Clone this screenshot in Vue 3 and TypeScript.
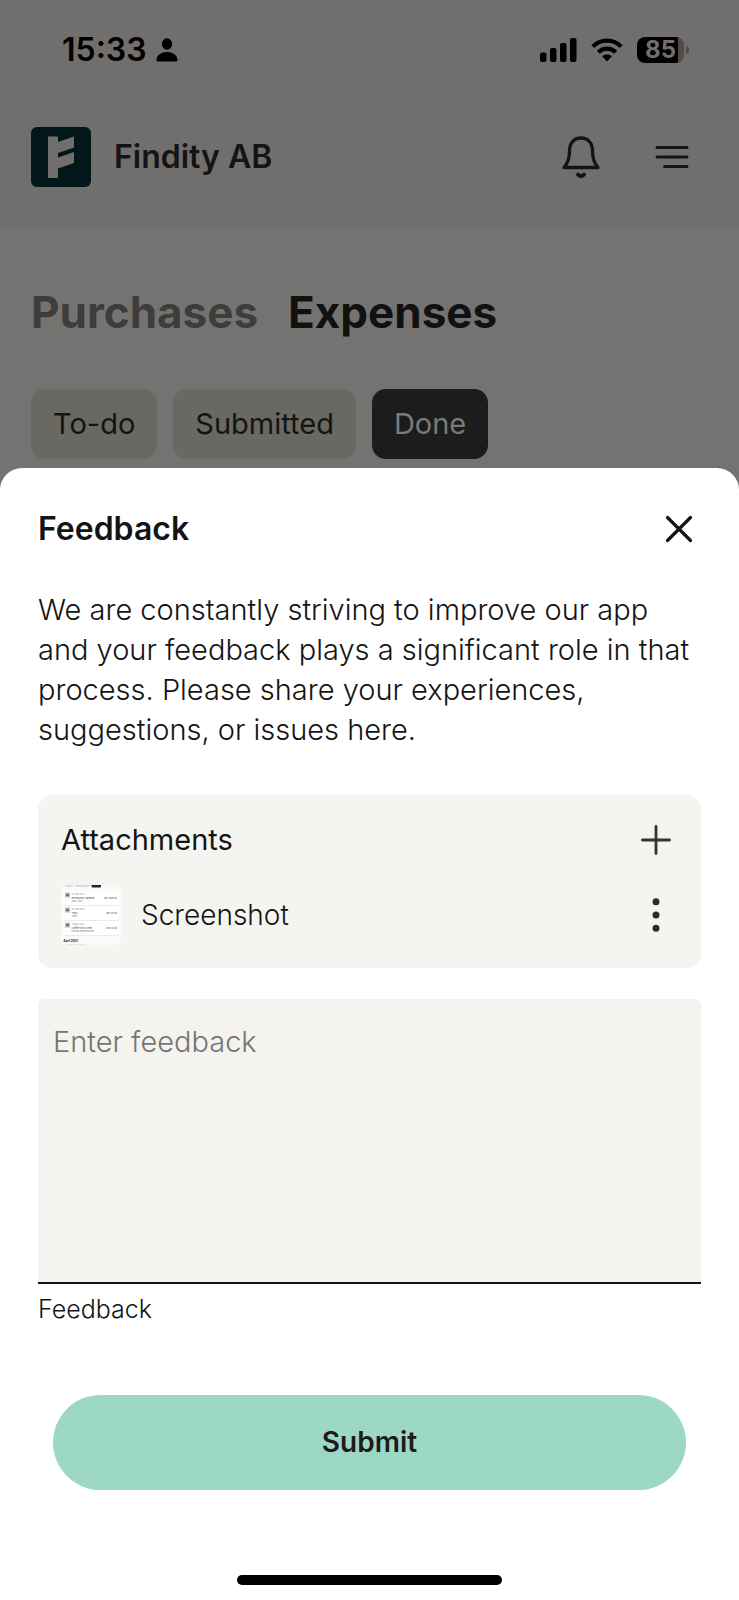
<script setup lang="ts">
import { ref } from 'vue'

const filters = ['To-do', 'Submitted', 'Done']
const activeFilter = ref('Done')
const feedback = ref('')

interface Receipt {
  date: string
  name: string
  note: string
  amount: string
  y: number
}

const receipts: Receipt[] = [
  { date: '13 June 2024', name: 'Restaurant Camera', note: 'Meal · Oslo', amount: 'SEK 1080.00', y: 6 },
  { date: '02 June 2024', name: 'Train', note: 'Travel', amount: 'SEK 94.00', y: 21 },
  { date: '21 May 2024', name: 'Coffee with client', note: 'External Representation', amount: 'SEK 84.00', y: 36 },
]
</script>

<template>
  <div class="screen">
    <div class="status">
      <div class="clock">
        <span>15:33</span>
        <svg width="22" height="24" viewBox="0 0 22 24" aria-hidden="true">
          <ellipse cx="11" cy="6" rx="5.2" ry="5.8" />
          <path d="M2.5 23.5C1 23.5.3 22.6.5 21.2 1.2 17 5.500 14 11 14s9.800 3 10.500 7.200c.2 1.400-.5 2.300-2 2.300z" />
        </svg>
      </div>
      <div class="indicators">
        <svg width="37" height="24" viewBox="0 0 37 24" aria-hidden="true">
          <rect x="0" y="14.500" width="6.500" height="9.500" rx="2" />
          <rect x="10" y="10" width="6.500" height="14" rx="2" />
          <rect x="20" y="5" width="6.500" height="19" rx="2" />
          <rect x="30" y="0" width="6.500" height="24" rx="2" />
        </svg>
        <svg width="32" height="24" viewBox="0 0 32 24" aria-hidden="true">
          <g fill="none" stroke="#000" stroke-width="4.200">
            <path d="M1.800 8.600C9.400 .6 22.600 .6 30.200 8.600" />
            <path d="M7.300 14.200C12 9.300 20 9.300 24.700 14.200" />
          </g>
          <path d="M16 23.500l-5-5.200c2.700-2.500 7.300-2.500 10 0z" />
        </svg>
        <div class="battery">
          <span class="level">85</span>
          <svg width="4" height="8" viewBox="0 0 4 8" aria-hidden="true"><path d="M0 0C4 1 4 7 0 8z" fill="#4e4d4c" /></svg>
        </div>
      </div>
    </div>

    <header class="header">
      <svg class="logo" width="60" height="60" viewBox="0 0 60 60" aria-hidden="true">
        <rect width="60" height="60" rx="6" fill="#021719" />
        <path d="M17 9.500h10v5.500l16-5.500v11L27 26v4.500l16-5.500v11L27 41.500V51H17z" fill="#706f6d" />
      </svg>
      <span class="company">Findity AB</span>
      <button class="icon-button" type="button" aria-label="Notifications">
        <svg width="40" height="44" viewBox="0 0 40 44">
          <g fill="none" stroke="#141414" stroke-width="3.300" stroke-linecap="round" stroke-linejoin="round">
            <path d="M3 32.500C6.500 28.500 8.500 23 8.500 16 8.500 8 13 3 20 3s11.500 5 11.500 13c0 7 2 12.500 5.500 16.500z" />
            <path d="M17 39.500c1.800 2.300 4.200 2.300 6 0" stroke-width="3.800" />
          </g>
        </svg>
      </button>
      <button class="icon-button" type="button" aria-label="Menu">
        <svg width="34" height="24" viewBox="0 0 34 24">
          <path d="M2 2.500h30M2 12h30M9.500 21.500H32" fill="none" stroke="#141414" stroke-width="3" stroke-linecap="round" />
        </svg>
      </button>
    </header>

    <main class="content">
      <nav class="tabs">
        <a href="#purchases">Purchases</a>
        <a href="#expenses" class="current" aria-current="page">Expenses</a>
      </nav>
      <div class="chips">
        <button
          v-for="filter in filters"
          :key="filter"
          type="button"
          :class="['chip', { selected: filter === activeFilter }]"
          @click="activeFilter = filter"
        >{{ filter }}</button>
      </div>
    </main>

    <section class="sheet" role="dialog" aria-labelledby="sheet-title">
      <div class="sheet-head">
        <h2 id="sheet-title">Feedback</h2>
        <button class="icon-button" type="button" aria-label="Close">
          <svg width="28" height="28" viewBox="0 0 28 28">
            <path d="M2.500 2.500l23 23M25.500 2.500l-23 23" fill="none" stroke="#141414" stroke-width="3.200" stroke-linecap="round" />
          </svg>
        </button>
      </div>

      <p class="intro">
        We are constantly striving to improve our app and your feedback plays a significant role in that process. Please share your experiences, suggestions, or issues here.
      </p>

      <div class="attachments">
        <div class="row">
          <h3>Attachments</h3>
          <button class="icon-button" type="button" aria-label="Add attachment">
            <svg width="30" height="30" viewBox="0 0 30 30">
              <path d="M15 1.500v27M1.500 15h27" fill="none" stroke="#333" stroke-width="2.800" stroke-linecap="round" />
            </svg>
          </button>
        </div>
        <div class="row">
          <svg class="thumb" width="60" height="60" viewBox="0 0 60 60" aria-hidden="true">
            <rect width="60" height="60" rx="5" fill="#fbfaf8" />
            <path d="M4 0h8v1.500q-4 1-8 0zM14 0h15v1.500q-7 1-15 0z" fill="#dedbd5" />
            <path d="M30.500 0H40v1.500q0 1-1 1h-7.500q-1 0-1-1z" fill="#222" />
            <g v-for="item in receipts" :key="item.name">
              <rect x="2" :y="item.y + 1" width="56" height="14" rx="1" fill="#ecebe8" />
              <rect x="2" :y="item.y" width="56" height="14" rx="1" fill="#fff" />
              <rect x="4" :y="item.y + 1.500" width="5" height="5" fill="#bbb" />
              <rect x="5.500" :y="item.y + 3" width="2" height="2" fill="#555" />
              <text x="10.500" :y="item.y + 4" font-size="2" fill="#888">{{ item.date }}</text>
              <text x="10.500" :y="item.y + 7.500" font-size="2.500" fill="#444">{{ item.name }}</text>
              <text x="10.500" :y="item.y + 11" font-size="2" fill="#777">{{ item.note }}</text>
              <text x="56" :y="item.y + 7.500" font-size="2.200" text-anchor="end" fill="#444">{{ item.amount }}</text>
            </g>
            <text x="2.500" y="56.500" font-size="2.800" font-weight="700" fill="#111">April 2024</text>
            <rect x="5" y="59" width="20" height="1" fill="#e6e5e2" />
          </svg>
          <span class="file">Screenshot</span>
          <button class="icon-button" type="button" aria-label="Attachment options">
            <svg width="30" height="34" viewBox="0 0 30 34" fill="#2b2b2b">
              <circle cx="15" cy="3.700" r="3.500" />
              <circle cx="15" cy="17" r="3.500" />
              <circle cx="15" cy="30.300" r="3.500" />
            </svg>
          </button>
        </div>
      </div>

      <textarea id="feedback" v-model="feedback" placeholder="Enter feedback"></textarea>
      <label class="helper" for="feedback">Feedback</label>

      <button class="submit" type="button">Submit</button>
      <div class="home-bar"></div>
    </section>
  </div>
</template>

<style>
body {
  margin: 0;
  background: #fff;
}
</style>

<style scoped>
.screen {
  box-sizing: border-box;
  display: flex;
  flex-direction: column;
  min-height: 100vh;
  background: #747371;
  color: #141414;
  font-family: Inter, "Liberation Sans", sans-serif;
}
h2, h3, p {
  margin: 0;
}
button {
  padding: 0;
  border: 0;
  background: none;
  color: inherit;
  font-family: inherit;
}
svg {
  display: block;
  flex: none;
}
.status {
  display: flex;
  justify-content: space-between;
  align-items: center;
  padding: 30px 49px 0 62px;
  height: 40px;
  background: #706f6d;
  color: #000;
}
.clock,
.indicators,
.battery {
  display: flex;
  align-items: center;
}
.clock {
  gap: 9px;
  font-size: 32px;
  line-height: 40px;
  font-weight: 600;
}
.indicators {
  gap: 14px;
}
.battery {
  gap: 2px;
}
.level {
  width: 47px;
  border-radius: 8px;
  background: linear-gradient(90deg, #000 41px, #4e4d4c 41px);
  color: #706f6d;
  font-size: 24px;
  line-height: 26px;
  font-weight: 700;
  text-align: center;
}
.header {
  display: flex;
  align-items: center;
  padding: 57px 50px 39px 31px;
  background: #706f6d;
}
.company {
  flex: 1;
  margin-left: 23px;
  font-size: 32px;
  line-height: 40px;
  font-weight: 600;
}
.header .icon-button + .icon-button {
  margin-left: 54px;
}
.content {
  padding: 58px 31px 0;
}
.tabs {
  display: flex;
  gap: 30px;
  font-size: 44px;
  line-height: 56px;
  font-weight: 700;
}
.tabs a {
  color: #3d3d3c;
  text-decoration: none;
}
.tabs .current {
  color: #111;
}
.chips {
  display: flex;
  gap: 16px;
  margin-top: 49px;
}
.chip {
  padding: 0 22px;
  border-radius: 14px;
  background: #696862;
  font-size: 29px;
  line-height: 70px;
}
.chip.selected {
  background: #1c1c1c;
  color: #7b7a78;
}
.sheet {
  display: flex;
  flex: 1;
  flex-direction: column;
  margin-top: 9px;
  padding: 0 38px 15px;
  border-radius: 22px 22px 0 0;
  background: #fff;
}
.sheet-head {
  display: flex;
  justify-content: space-between;
  align-items: center;
  padding: 41px 8px 0 0;
}
h2 {
  font-size: 32px;
  line-height: 40px;
  font-weight: 600;
}
.intro {
  margin-top: 41px;
  font-size: 29px;
  line-height: 40px;
  font-weight: 300;
}
.attachments {
  display: flex;
  flex-direction: column;
  gap: 25px;
  margin-top: 45px;
  padding: 25px 30px 23px 23px;
  border-radius: 14px;
  background: #f4f5f0;
}
.row {
  display: flex;
  align-items: center;
}
h3 {
  flex: 1;
  font-size: 29px;
  line-height: 40px;
  font-weight: 400;
}
.file {
  flex: 1;
  margin-left: 20px;
  font-size: 28px;
  line-height: 40px;
  font-weight: 300;
}
textarea {
  box-sizing: border-box;
  display: block;
  width: 100%;
  height: 285px;
  margin: 31px 0 0;
  padding: 23px 15px;
  border: 0;
  border-bottom: 2px solid #141414;
  border-radius: 6px 6px 0 0;
  background: #f4f3ef;
  color: #141414;
  font-family: inherit;
  font-size: 29px;
  line-height: 40px;
  font-weight: 300;
  resize: none;
}
textarea::placeholder {
  color: #757573;
  opacity: 1;
}
.helper {
  margin-top: 9px;
  font-size: 25px;
  line-height: 32px;
  font-weight: 300;
}
.submit {
  margin: 70px 15px 0;
  border-radius: 48px;
  background: #9dd8c5;
  color: #1c1c1c;
  font-size: 28px;
  line-height: 95px;
  font-weight: 600;
}
.home-bar {
  align-self: center;
  width: 40%;
  height: 10px;
  margin-top: auto;
  border-radius: 5px;
  background: #000;
}
</style>
